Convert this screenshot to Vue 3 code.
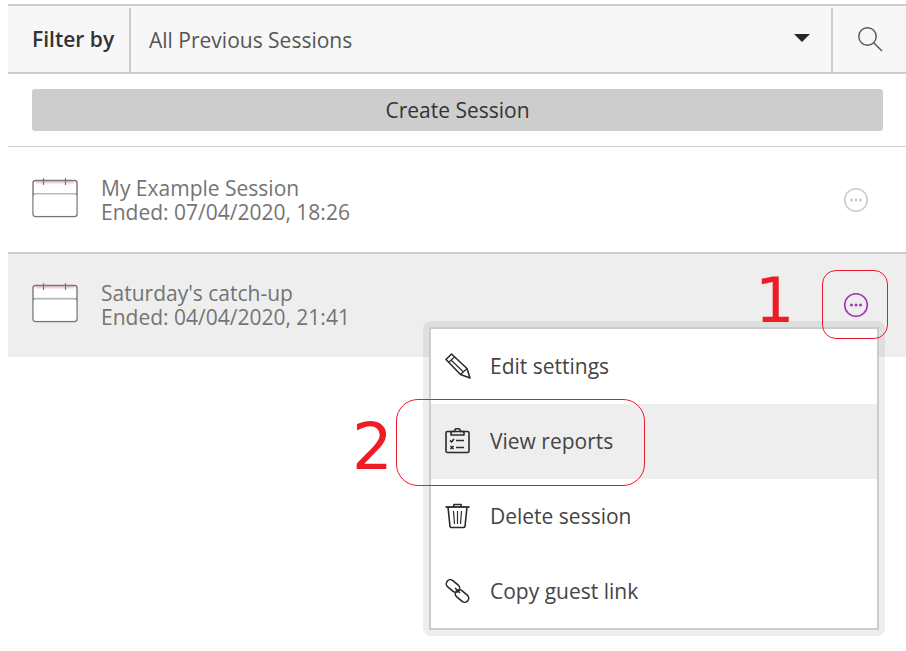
<script setup>
const sessions = [
  { name: 'My Example Session', ended: 'Ended: 07/04/2020, 18:26', active: false },
  { name: "Saturday's catch-up", ended: 'Ended: 04/04/2020, 21:41', active: true }
]

const menuItems = [
  { label: 'Edit settings', icon: 'edit' },
  { label: 'View reports', icon: 'report' },
  { label: 'Delete session', icon: 'trash' },
  { label: 'Copy guest link', icon: 'link' }
]
</script>

<template>
  <div class="page">
    <div class="filter-bar">
      <div class="filter-label">Filter by</div>
      <div class="filter-select">
        <span>All Previous Sessions</span>
        <span class="caret"></span>
      </div>
      <div class="filter-search">
        <svg width="28" height="28" viewBox="0 0 28 28" fill="none" stroke="#555" stroke-width="1.4">
          <circle cx="11.5" cy="11.5" r="8.7" />
          <path d="M18 18l8 8" />
        </svg>
      </div>
    </div>

    <div class="create-wrap">
      <button class="create-btn">Create Session</button>
    </div>

    <div class="session-list">
      <div v-for="s in sessions" :key="s.name" class="session" :class="{ active: s.active }">
        <svg class="cal" width="46" height="40" viewBox="0 0 46 40" fill="none">
          <path d="M3 2.5h40a2 2 0 0 1 2 2v10H1v-10a2 2 0 0 1 2-2z" fill="#fff" />
          <rect x="4" y="3" width="38" height="2.5" fill="#f6cfcf" />
          <rect x="1" y="2.5" width="44" height="36" rx="2.5" stroke="#777" stroke-width="1.4" />
          <path d="M1 16h44M11.5 0v7M33.5 0v7" stroke="#777" stroke-width="1.2" />
          <rect x="1.7" y="16.6" width="42.6" height="21.2" rx="2" fill="#fff" />
        </svg>
        <div class="session-text">
          <div>{{ s.name }}</div>
          <div>{{ s.ended }}</div>
        </div>
        <svg class="more" width="26" height="26" viewBox="0 0 26 26" fill="none">
          <circle cx="13" cy="13" r="11.3" stroke="currentColor" stroke-width="1.6" />
          <circle cx="8.5" cy="13" r="1.5" fill="currentColor" />
          <circle cx="13" cy="13" r="1.5" fill="currentColor" />
          <circle cx="17.5" cy="13" r="1.5" fill="currentColor" />
        </svg>
      </div>
    </div>

    <div class="menu">
      <div class="menu-inner">
        <div v-for="item in menuItems" :key="item.label" class="menu-item" :class="{ hover: item.icon === 'report' }">
          <svg width="26" height="26" viewBox="0 0 26 26" fill="none" stroke="#2b2b2b" stroke-width="1.6" stroke-linejoin="round">
            <template v-if="item.icon === 'edit'">
              <path d="M1 6.500L6.500 1 22 15.500l3 9.500-9.500-3.500z" />
              <path d="M3.500 9.500l6-5.500M15.500 21.500l6.500-6M6 7l12.500 12" stroke-width="1.2" />
            </template>
            <template v-else-if="item.icon === 'report'">
              <rect x="1" y="3.500" width="23" height="21" rx="1.500" />
              <path d="M6 3.500V7h13V3.500h-3.500a3 3 0 0 0-6 0z" />
              <path d="M11 12.500h8M11 19.500h8" />
              <path d="M5 12.500l1.500 1.500L9 11M5.500 18l3 3M8.500 18l-3 3" />
            </template>
            <template v-else-if="item.icon === 'trash'">
              <path d="M0.500 4h24" stroke-width="1.800" />
              <path d="M8.500 4l.5-2.500h7l.5 2.500" />
              <path d="M3 4l2 19.500a1.500 1.500 0 0 0 1.500 1h12a1.500 1.500 0 0 0 1.500-1L22 4" />
              <path d="M8.500 8l1 13M12.500 8v13M16.500 8l-1 13" stroke-width="1.200" />
            </template>
            <template v-else>
              <rect x="0.500" y="4" width="15" height="8" rx="4" transform="rotate(40 8 8)" />
              <rect x="9.500" y="14" width="15" height="8" rx="4" transform="rotate(40 17 18)" />
              <path d="M10 10l5 5" />
            </template>
          </svg>
          <span>{{ item.label }}</span>
        </div>
      </div>
    </div>

    <div class="callout callout-one"></div>
    <div class="callout callout-two"></div>
    <span class="step step-one">1</span>
    <span class="step step-two">2</span>
  </div>
</template>

<style scoped>
.page {
  position: relative;
  width: 906px;
  height: 651px;
  padding: 4px 0 0 8px;
  box-sizing: border-box;
  overflow: hidden;
  background: #fff;
  font-family: "Open Sans", sans-serif;
  color: #333;
}

.filter-bar {
  display: flex;
  height: 70px;
  box-sizing: border-box;
  border-top: 2px solid #ccc;
  border-bottom: 2px solid #ccc;
  background: #f7f7f7;
}

.filter-label {
  width: 123px;
  margin: 2px 0 0;
  padding-left: 24px;
  box-sizing: border-box;
  border-right: 2px solid #ccc;
  font-size: 21px;
  font-weight: 600;
  line-height: 62px;
  color: #333;
}

.filter-select {
  flex: 1;
  display: flex;
  align-items: center;
  justify-content: space-between;
  margin: 2px 0 0;
  padding: 0 21px 0 18px;
  border-right: 2px solid #ccc;
  font-size: 21px;
  color: #555;
}

.caret {
  width: 0;
  height: 0;
  margin-top: -4px;
  border-left: 8px solid transparent;
  border-right: 8px solid transparent;
  border-top: 8px solid #262626;
}

.filter-search {
  width: 73px;
  display: flex;
  align-items: center;
  justify-content: center;
}

.create-wrap {
  padding: 15px 23px 15px 24px;
  border-bottom: 1px solid #ccc;
}

.create-btn {
  display: block;
  width: 100%;
  height: 42px;
  padding: 0 0 1px;
  border: none;
  border-radius: 3px;
  background: #cdcdcd;
  font-family: inherit;
  font-size: 21px;
  color: #333;
}

.session {
  display: flex;
  align-items: center;
  height: 105px;
  padding: 0 37px 0 24px;
  color: #ccc;
  border-bottom: 2px solid #ccc;
}

.session.active {
  height: 101px;
  padding-bottom: 2px;
  background: #eee;
  border-bottom: none;
  color: #a236b2;
}

.cal {
  flex: none;
  margin-bottom: 3px;
}

.session-text {
  flex: 1;
  margin-left: 23px;
  font-size: 21px;
  line-height: 24px;
  color: #747474;
}

.more {
  flex: none;
}

.menu {
  position: absolute;
  left: 423px;
  top: 321px;
  width: 462px;
  height: 315px;
  box-sizing: border-box;
  padding: 6px;
  border-radius: 8px;
  background: rgba(0, 0, 0, 0.065);
}

.menu-inner {
  height: 100%;
  box-sizing: border-box;
  border: 2px solid #ccc;
  background: #fff;
}

.menu-item {
  display: flex;
  align-items: center;
  gap: 19px;
  height: 75px;
  box-sizing: border-box;
  padding: 0 0 2px 14px;
  font-size: 21px;
  color: #444;
}

.menu-item.hover {
  background: #eee;
}

.callout {
  position: absolute;
  box-sizing: border-box;
  border: 1px solid #e8192c;
}

.callout-one {
  left: 822px;
  top: 270px;
  width: 66px;
  height: 69px;
  border-radius: 14px;
}

.callout-two {
  left: 396px;
  top: 399px;
  width: 249px;
  height: 87px;
  border-radius: 22px;
}

.step {
  position: absolute;
  font-family: "DejaVu Sans", sans-serif;
  font-size: 62px;
  line-height: 62px;
  color: #ee1c25;
}

.step-one {
  left: 755px;
  top: 270px;
}

.step-two {
  left: 352px;
  top: 416px;
  font-size: 64px;
}
</style>
